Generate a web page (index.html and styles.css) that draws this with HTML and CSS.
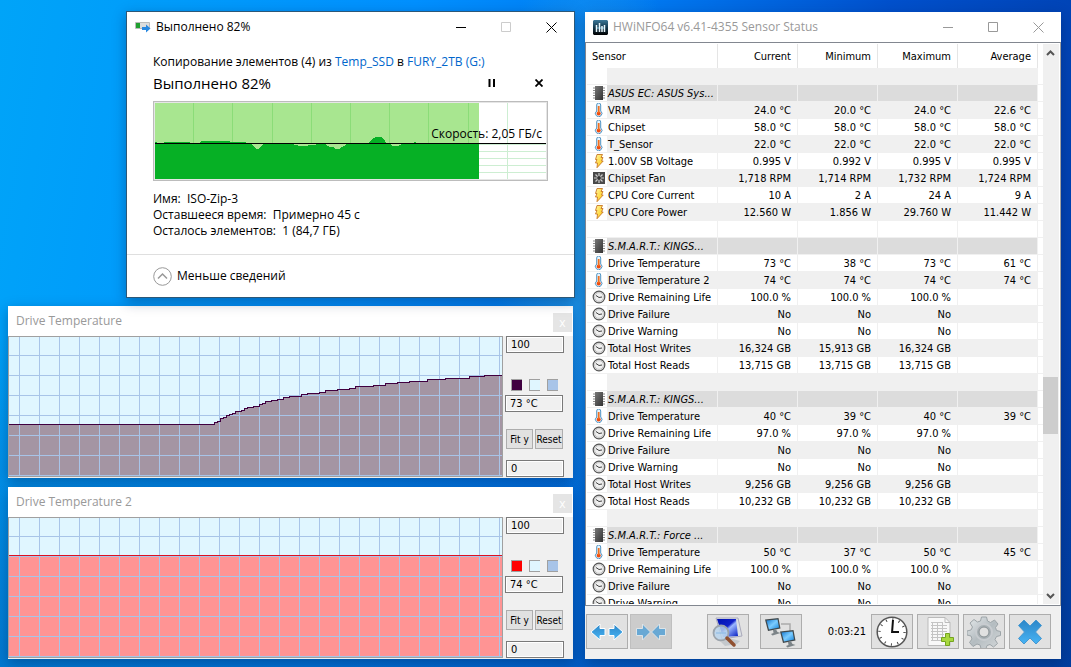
FILE: index.html
```html
<!DOCTYPE html>
<html lang="ru">
<head>
<meta charset="utf-8">
<title>Desktop</title>
<link rel="stylesheet" href="styles.css">
</head>
<body>
<svg class="defs" aria-hidden="true">
  <defs>
    <linearGradient id="chipFill" x1="0" y1="0" x2="1" y2="1"><stop offset="0" stop-color="#777"/><stop offset="1" stop-color="#333"/></linearGradient>
    <linearGradient id="boltFill" x1="0" y1="0" x2="1" y2="1"><stop offset="0" stop-color="#fff7a0"/><stop offset="1" stop-color="#ffc400"/></linearGradient>
    <linearGradient id="blueFill" x1="0" y1="0" x2="0" y2="1"><stop offset="0" stop-color="#2c86c8"/><stop offset="1" stop-color="#48b4f4"/></linearGradient>
    <linearGradient id="screenFill" x1="0" y1="0" x2="1" y2="1"><stop offset="0" stop-color="#0010b0"/><stop offset=".45" stop-color="#1020c8"/><stop offset=".55" stop-color="#9cb8ff"/><stop offset="1" stop-color="#0018c0"/></linearGradient>
    <linearGradient id="skyFill" x1="0" y1="0" x2="1" y2="1"><stop offset="0" stop-color="#1478d0"/><stop offset=".5" stop-color="#7cccff"/><stop offset="1" stop-color="#1484dc"/></linearGradient>
    <linearGradient id="steelFill" x1="0" y1="0" x2="1" y2="1"><stop offset="0" stop-color="#e8ecee"/><stop offset=".5" stop-color="#b4bcc0"/><stop offset="1" stop-color="#d4d8da"/></linearGradient>
    <linearGradient id="logoFill" x1="0" y1="0" x2="0" y2="1"><stop offset="0" stop-color="#3c7898"/><stop offset=".5" stop-color="#14384c"/><stop offset="1" stop-color="#000"/></linearGradient>
    <pattern id="gridV" width="20" height="20" patternUnits="userSpaceOnUse"><path d="M10 0h1v20h-1z" fill="#a8c4e8"/></pattern>
    <pattern id="gridH" width="20" height="20" patternUnits="userSpaceOnUse"><path d="M0 18h20v1H0z" fill="#a8c4e8"/></pattern>
  </defs>
  <symbol id="chip" viewBox="0 0 14 14"><path d="M1 2h12M1 4.500h12M1 7h12M1 9.500h12M1 12h12" stroke="#888"/><path d="M3 0h8v14H3z" fill="url(#chipFill)"/></symbol>
  <symbol id="temp" viewBox="0 0 14 14"><path d="M4.700 2a2 2 0 0 1 4 0v6a3.200 3.200 0 1 1-4 0z" fill="#e8f4fc" stroke="#5094c4"/><circle cx="6.700" cy="10.500" r="2" fill="#f04c10"/><path d="M6.700 3v7" stroke="#f07020" stroke-width="1.800"/></symbol>
  <symbol id="volt" viewBox="0 0 14 14"><path d="M5 .5h5.500L9 3.500h2L9.500 7h1.700L5 13.700 5.500 9H3.500L5 5.500H3.500z" fill="url(#boltFill)" stroke="#c87828" stroke-width=".9"/></symbol>
  <symbol id="fan" viewBox="0 0 14 14"><path d="M1 1h12v12H1z" fill="#4a4a4a"/><path d="M7 2v10M2 7h10M3.500 3.500l7 7M10.500 3.500l-7 7" stroke="#ccc" stroke-width="1.200"/><circle cx="7" cy="7" r="1.900" fill="#333"/></symbol>
  <symbol id="dial" viewBox="0 0 14 14"><circle cx="7" cy="7" r="5.800" fill="#f0f0f0" stroke="#555" stroke-width="1.200"/><circle cx="7" cy="7" r="4.400" fill="none" stroke="#bbb" stroke-width=".8"/><path d="M4 5.500L7 7.500l3-.5" stroke="#444" fill="none"/></symbol>
  <symbol id="monitor" viewBox="0 0 18 18"><path d="M1 1.500l13.500-1.500 2 10.500L4 13z" fill="#40484c"/><path d="M2.500 2.600l11-1.200 1.500 8.200L5 11.600z" fill="url(#skyFill)"/><path d="M9 12l3-.5 1.500 2.500 3 1-8 2.500-1.500-1.500 2.500-1z" fill="#7c8488"/></symbol>
</svg>

<main class="desktop">
  <section class="window copy" aria-label="Копирование">
    <header class="bar">
      <svg class="copy-icon" viewBox="0 0 16 12" width="16" height="12"><path d="M.5 1.500h14v6H.5z" fill="#ddd" stroke="#bbb"/><path d="M1 2h4v5H1z" fill="#20a030"/><path d="M7 6h4V3.500l4.500 4-4.500 4V9H7z" fill="#2888e0"/></svg>
      <span class="bar-title">Выполнено 82%</span>
      <button class="cap" aria-label="Свернуть"><svg width="11" height="11"><path d="M0 5.500h10" stroke="#000"/></svg></button>
      <button class="cap" aria-label="Развернуть"><svg width="11" height="11"><path d="M.5.500h9v9h-9z" fill="none" stroke="#ccc"/></svg></button>
      <button class="cap" aria-label="Закрыть"><svg width="11" height="11"><path d="M.5.500l10 10M10.500.500l-10 10" stroke="#000"/></svg></button>
    </header>
    <div class="copy-body">
      <p class="route">Копирование элементов (4) из <a href="#src">Temp_SSD</a> в <a href="#dst">FURY_2TB (G:)</a></p>
      <div class="progress-head">
        <h1>Выполнено 82%</h1>
        <button class="mini" aria-label="Пауза"><svg width="8" height="8"><path d="M1.500 0v8M6 0v8" stroke="#000" stroke-width="2"/></svg></button>
        <button class="mini" aria-label="Отмена"><svg width="8" height="8"><path d="M.5.500l7 7M7.500.500l-7 7" stroke="#000" stroke-width="1.800"/></svg></button>
      </div>
      <div class="speed">
        <svg viewBox="0 0 391 76" preserveAspectRatio="none">
          <path d="M0 0h324v76H0z" fill="#a8e690"/>
          <path d="M38.500 0v76M77.500 0v76M117.500 0v76M156.500 0v76M195.500 0v76M234.500 0v76M273.500 0v76M313.500 0v76" stroke="#8bdc78"/>
          <path d="M352.500 0v76M324 41.500h67M324 48.500h67M324 55.500h67M324 62.500h67M324 69.500h67" stroke="#cdeed2"/>
          <path d="M0 39h2v1h6l2-1h25v1h9l2-2h28l2 1h15v1h122l4-4 4-2h5l4 4 1 2h28v-1h2v1h63v36H0z" fill="#06b025"/>
          <path d="M324 41h67v35h-67z" fill="#fff"/>
          <path d="M352.500 41v35M324 41.500h67M324 48.500h67M324 55.500h67M324 62.500h67M324 69.500h67" stroke="#cdeed2"/>
          <path d="M96 41h12l-3 3-2 2h-2l-2-2zM135 41h28l-5 1h-5v1h-10v-1zM170 41h22l-3 2-5 3h-3l-3-2-3 0zM235 41h12l-4 2h-5z" fill="#a8e690"/>
          <path d="M0 40.500h391" stroke="#000"/>
        </svg>
        <span class="speed-text">Скорость: 2,05 ГБ/с</span>
      </div>
      <div class="facts">
        <p>Имя:&nbsp; ISO-Zip-3</p>
        <p>Оставшееся время:&nbsp; Примерно 45 с</p>
        <p>Осталось элементов:&nbsp; 1 (84,7 ГБ)</p>
      </div>
    </div>
    <footer class="copy-foot">
      <button class="less"><svg width="19" height="19"><circle cx="9.500" cy="9.500" r="8.800" fill="none" stroke="#999"/><path d="M5 11.500l4.500-4.500 4.500 4.500" fill="none" stroke="#999" stroke-width="1.500"/></svg>Меньше сведений</button>
    </footer>
  </section>

  <section class="window temp first">
    <header class="temp-bar"><h2>Drive Temperature</h2><button aria-label="Close">x</button></header>
    <div class="temp-body">
      <svg class="chart" viewBox="0 0 493 139" preserveAspectRatio="none">
        <defs><path id="curve" d="M-2 87.500H205V85.500H208V84.500H211V81.500H214V80.500H217V78.500H220V77.500H223V76.500H226V74.500H232V73.500H235V71.500H238V70.500H244V69.500H250V67.500H253V66.500H256V64.500H262V63.500H268V62.500H274V60.500H280V59.500H292V57.500H298V56.500H310V55.500H316V53.500H328V52.500H340V51.500H346V49.500H364V48.500H376V46.500H388V45.500H400V44.500H418V42.500H436V41.500H460V39.500H475V38.500H495V142H-2z"/></defs>
        <path d="M0 0h493v139H0z" fill="#e0f6ff"/>
        <use href="#curve" class="area"/>
        <path d="M0 0h493v139H0z" fill="url(#gridV)"/><path d="M0 0h493v139H0z" fill="url(#gridH)"/>
        <use href="#curve" class="outline"/>
      </svg>
      <div class="side">
        <input class="val" aria-label="Maximum" value="100">
        <div class="swatches"><button class="c-dark" aria-label="Line colour"></button><button class="c-back" aria-label="Background colour"></button><button class="c-grid" aria-label="Grid colour"></button></div>
        <input class="val now" aria-label="Current temperature" value="73 °C">
        <div class="pair"><button>Fit y</button><button>Reset</button></div>
        <input class="val" aria-label="Minimum" value="0">
      </div>
    </div>
  </section>

  <section class="window temp second">
    <header class="temp-bar"><h2>Drive Temperature 2</h2><button aria-label="Close">x</button></header>
    <div class="temp-body">
      <svg class="chart" viewBox="0 0 493 139" preserveAspectRatio="none">
        <path d="M0 0h493v139H0z" fill="#e0f6ff"/>
        <path d="M0 38h493v101H0z" fill="#ff9494"/>
        <path d="M0 0h493v139H0z" fill="url(#gridV)"/><path d="M0 0h493v139H0z" fill="url(#gridH)"/>
        <path d="M0 37.500h493" stroke="#e01020"/>
      </svg>
      <div class="side">
        <input class="val" aria-label="Maximum" value="100">
        <div class="swatches"><button class="c-red" aria-label="Line colour"></button><button class="c-back" aria-label="Background colour"></button><button class="c-grid" aria-label="Grid colour"></button></div>
        <input class="val now" aria-label="Current temperature" value="74 °C">
        <div class="pair"><button>Fit y</button><button>Reset</button></div>
        <input class="val" aria-label="Minimum" value="0">
      </div>
    </div>
  </section>

  <section class="window hw" lang="en">
    <header class="bar idle">
      <svg class="logo" viewBox="0 0 15 15" width="15" height="15"><path d="M1 0h13l1 1v13l-1 1H1l-1-1V1z" fill="url(#logoFill)"/><path d="M3 8h9" stroke="#6cc0e0"/><path d="M3.500 5v7M6.500 3v9M9 6v6M11.500 5v7" stroke="#e8f6fc" stroke-width="1.500"/></svg>
      <span class="bar-title">HWiNFO64 v6.41-4355 Sensor Status</span>
      <button class="cap" aria-label="Minimize"><svg width="11" height="11"><path d="M0 5.500h10" stroke="#999"/></svg></button>
      <button class="cap" aria-label="Maximize"><svg width="11" height="11"><path d="M.5.500h9v9h-9z" fill="none" stroke="#999"/></svg></button>
      <button class="cap" aria-label="Close"><svg width="11" height="11"><path d="M.5.500l10 10M10.500.500l-10 10" stroke="#999"/></svg></button>
    </header>
    <div class="list">
      <div class="view">
        <table>
          <colgroup><col class="w-icon"><col><col class="w-num"><col class="w-num"><col class="w-num"><col class="w-num"><col class="w-end"></colgroup>
          <thead><tr><th colspan="2" class="name">Sensor</th><th>Current</th><th>Minimum</th><th>Maximum</th><th>Average</th><th class="end"></th></tr></thead>
          <tbody id="rows"></tbody>
        </table>
      </div>
      <div class="scroll">
        <svg width="15" height="19"><path d="M4 11l3.500-3.500L11 11" fill="none" stroke="#555" stroke-width="2"/></svg>
        <div class="track"><div class="thumb"></div></div>
        <svg width="15" height="19"><path d="M4 9l3.500 3.500L11 9" fill="none" stroke="#555" stroke-width="2"/></svg>
      </div>
    </div>
    <footer class="tools">
      <div class="group">
        <button aria-label="Expand"><svg width="34" height="20"><path d="M1 10l9-8v4.500h5v7h-5V18zM33 10l-9-8v4.500h-5v7h5V18z" fill="url(#blueFill)" stroke="#fff"/></svg></button>
        <button class="off" aria-label="Collapse" disabled><svg width="34" height="20"><path d="M16.500 10l-8-8v4.500h-6v7h6V18zM17.500 10l8-8v4.500h6v7h-6V18z" fill="#68a8d4" stroke="#dde4e8"/></svg></button>
      </div>
      <div class="group mid">
        <button aria-label="Summary"><svg width="34" height="32"><path d="M5 2h22l4 18-20 3z" fill="#dce0e4" stroke="#aab"/><path d="M6 3h19l2 17-15 1z" fill="url(#screenFill)"/><path d="M10 26l8-4 11 3-3 3-12 2z" fill="#c4c8cc"/><circle cx="10" cy="17" r="7.500" fill="#b8d4ec" fill-opacity=".85" stroke="#9ca4ac" stroke-width="1.800"/><path d="M5 17h10" stroke="#88b8e4"/><path d="M16 22l7 7" stroke="#905030" stroke-width="3.500" stroke-linecap="round"/></svg></button>
        <button aria-label="Remote"><svg width="34" height="32"><path d="M17 8h9v9" fill="none" stroke="#aaa" stroke-width="1.500"/><use href="#monitor" x="0" y="2" width="18" height="18"/><use href="#monitor" x="15" y="14" width="18" height="18"/></svg></button>
      </div>
      <output>0:03:21</output>
      <div class="group right">
        <button aria-label="Clock"><svg width="34" height="32"><circle cx="17" cy="16" r="14.800" fill="#fff" stroke="#555" stroke-width="1.500"/><circle cx="17" cy="16" r="12.500" fill="none" stroke="#444" stroke-width="2.500" stroke-dasharray="1 5.545"/><path d="M17 17l1-13M17 16h7" fill="none" stroke="#111" stroke-width="2"/></svg></button>
        <button aria-label="Log"><svg width="34" height="32"><path d="M7 1.500h17l5 5v23H7z" fill="#f8f8f8" stroke="#bbb"/><path d="M24 1.500v5h5" fill="none" stroke="#bbb"/><path d="M10 6.500h12M10 9.500h16M10 12.500h16M10 15.500h16M10 18.500h13M10 21.500h11M10 24.500h11M11.500 6v19M16.500 6v19M21.500 6v15" stroke="#c4c4c4"/><path d="M24.500 17.500h4v4h4v4h-4v4h-4v-4h-4v-4h4z" fill="#a8d840" stroke="#74a420"/></svg></button>
        <button aria-label="Settings"><svg width="34" height="32"><path d="M14.500 1h5l1 4 3 1.500 4-2.500 3.500 4-2.500 3.500 1 3 4 1v4l-4 1-1.500 3 2.500 4-4 3.500-3.500-2.500-3 1-1 3h-5l-1-3.500-3-1-4 2.500-3.500-4 2.500-3.500-1-3-4-1v-4l4-1 1.500-3-2.500-4 4-3.500 3.500 2.500 3-1z" fill="url(#steelFill)" stroke="#9ca4a8"/><circle cx="17" cy="16" r="8" fill="#a8b0b4" stroke="#c8ccd0" stroke-width="2"/><circle cx="17" cy="16" r="5" fill="#e1e1e1" stroke="#889094"/></svg></button>
        <button aria-label="Close sensors"><svg width="34" height="32"><path d="M11 4l6 6 6-6 5.500 5.500-6 6.500 6 6.500L23 28l-6-6-6 6-5.500-5.500 6-6.500-6-6.500z" fill="url(#blueFill)" stroke="#4898d0"/></svg></button>
      </div>
    </footer>
  </section>
</main>
<script src="sensors.js"></script>
</body>
</html>
```

FILE: styles.css
```css
* { box-sizing: border-box; }
body { margin: 0; font: 12px/16px "Open Sans", "Noto Sans", sans-serif; color: #000; }
p, h1, h2 { margin: 0; font-weight: 400; }
button { padding: 0; border: 0; background: none; font: inherit; color: inherit; }
.defs { position: absolute; width: 0; height: 0; }

.desktop {
  position: relative; min-height: 100vh; overflow: hidden;
  background:
    radial-gradient(ellipse 100px 300px at 590px 220px, #28a0e8, transparent),
    linear-gradient(100deg, #00a4f8 0%, #0090ff 35%, #0078f0 55%, #0050cc 75%, #003ca8 100%);
}
.desktop::before {
  content: ""; position: absolute; inset: 0;
  background: linear-gradient(180deg, transparent 50%, #00409066 100%);
}
.window { position: absolute; background: #fff; box-shadow: 0 4px 12px #00205060; display: flex; flex-direction: column; }

.bar { display: flex; align-items: center; height: 30px; padding-left: 8px; }
.bar-title { flex: 1; margin-left: 5px; white-space: nowrap; }
.cap { width: 45px; height: 29px; display: grid; place-items: center; }
.idle { color: #999; }

.copy { left: 126px; top: 11px; width: 449px; min-height: 287px; border: 1px solid #2c5878; z-index: 2; }
.copy-body { flex: 1; padding: 12px 26px 0; }
.route a { color: #0066cc; text-decoration: none; }
.progress-head { display: flex; align-items: center; height: 25px; margin-bottom: 6px; gap: 31px; padding-right: 1px; }
.progress-head h1 { flex: 1; font-size: 15px; line-height: 24px; }
.mini { width: 16px; height: 16px; display: grid; place-items: center; }
.speed { position: relative; height: 80px; border: 1px solid #bcbcbc; padding: 1px; background: #e6e6e6; }
.speed svg { display: block; width: 100%; height: 100%; background: #fff; shape-rendering: crispEdges; }
.speed-text { position: absolute; right: 5px; top: 24px; }
.facts { margin-top: 10px; }
.copy-foot { border-top: 1px solid #dfdfdf; height: 43px; padding: 0 26px; display: flex; align-items: center; }
.less { display: flex; align-items: center; gap: 5px; }

.temp { left: 8px; width: 565px; background: #f0f0f0; }
.first { top: 306px; }
.second { top: 487px; }
.temp-bar { display: flex; justify-content: space-between; align-items: center; height: 30px; padding: 0 1px 0 8px; background: #fff; color: #999; }
.temp-bar h2 { font-size: 12px; }
.temp-bar button { align-self: flex-end; width: 19px; height: 19px; margin-bottom: 4px; background: #e5e5e5; color: #fff; line-height: 16px; }
.temp-body { display: flex; height: 142px; padding-bottom: 1px; font: 11px/15px "DejaVu Sans Condensed", "DejaVu Sans", sans-serif; }
.chart { flex: 1; min-width: 0; height: 141px; border: 1px solid #a0a0a0; shape-rendering: crispEdges; }
.area { fill: #a495a3; }
.outline { fill: none; stroke: #400040; }
.side { width: 70px; padding-left: 3px; display: flex; flex-direction: column; }
.val { width: 58px; height: 17px; padding: 0 4px; border: 1px solid #7a7a7a; outline: 1px solid #fff; outline-offset: -2px; background: #f0f0f0; font: inherit; }
.swatches { display: flex; gap: 7px; margin: 26px 0 4px 5px; }
.swatches button { width: 11px; height: 12px; border: 1px solid #a0a0a0; border-right: 0; }
.now { margin-left: -1px; }
.c-dark { background: #400040; }
.c-red { background: #f00; }
.c-back { background: #e0f6ff; }
.c-grid { background: #a8c4e8; }
.pair { display: flex; gap: 2px; margin: 17px 0 11px; }
.pair button { width: 27px; height: 20px; border: 1px solid #adadad; background: #e1e1e1; font-size: 10px; white-space: nowrap; }
.pair button + button { width: 28px; }

.hw { left: 585px; top: 12px; width: 476px; background: #f0f0f0; font: 11px/15px "DejaVu Sans Condensed", "DejaVu Sans", sans-serif; }
.hw .bar { background: #fff; font: 12px/16px "Open Sans", "Noto Sans", sans-serif; }
.list { display: flex; height: 564px; border: 1px solid #828790; border-right-color: #a0a0a0; background: #fff; padding: 1px; }
.view { flex: 1; overflow: hidden; }
table { width: 100%; border-collapse: separate; border-spacing: 0; table-layout: fixed; }
.w-icon { width: 20px; }
.w-num { width: 80px; }
.w-end { width: 5px; }
th { height: 24px; padding: 0 6px 0 0; font-weight: 400; text-align: right; border-right: 1px solid #e5e5e5; }
th.name { padding-left: 5px; text-align: left; }
th.end { border: 0; }
td { height: 17px; padding: 2px 6px 0 0; text-align: right; line-height: 14px; white-space: nowrap; border-bottom: 1px solid #f0f0f0; border-right: 1px solid #f0f0f0; }
td.icon { padding: 0 0 0 5px; border-right: 0; }
td.icon svg { display: block; width: 14px; height: 14px; }
td.name { padding: 2px 0 0 1px; text-align: left; }
td.end { border-right: 0; }
.shade td:not(.icon, .end) { background: #f0f0f0; }
.section td:not(.icon, .end) { background: #dcdcdc; }
.section .name { font-style: italic; }
.scroll { width: 16px; background: #f0f0f0; display: flex; flex-direction: column; }
.scroll svg { display: block; flex: none; }
.track { flex: 1; display: flex; flex-direction: column; padding-top: 314px; }
.thumb { height: 57px; width: 15px; background: #cdcdcd; }

.tools { display: flex; align-items: center; height: 53px; padding: 0 10px 2px 1px; }
.group { display: flex; gap: 2px; }
.tools button { width: 42px; height: 35px; display: grid; place-items: center; border: 1px solid #adadad; background: #e1e1e1; }
.tools .off { background: #ccc; border-color: #bfbfbf; }
.mid { gap: 11px; margin-left: 35px; }
.right { gap: 4px; }
.tools output { flex: 1; text-align: right; padding-right: 5px; }
```

FILE: sensors.js
```js
const rows = [
  null,
  ["ASUS EC: ASUS Sys..."],
  ["temp", "VRM", "24.0 °C", "20.0 °C", "24.0 °C", "22.6 °C"],
  ["temp", "Chipset", "58.0 °C", "58.0 °C", "58.0 °C", "58.0 °C"],
  ["temp", "T_Sensor", "22.0 °C", "22.0 °C", "22.0 °C", "22.0 °C"],
  ["volt", "1.00V SB Voltage", "0.995 V", "0.992 V", "0.995 V", "0.995 V"],
  ["fan", "Chipset Fan", "1,718 RPM", "1,714 RPM", "1,732 RPM", "1,724 RPM"],
  ["volt", "CPU Core Current", "10 A", "2 A", "24 A", "9 A"],
  ["volt", "CPU Core Power", "12.560 W", "1.856 W", "29.760 W", "11.442 W"],
  null,
  ["S.M.A.R.T.: KINGS..."],
  ["temp", "Drive Temperature", "73 °C", "38 °C", "73 °C", "61 °C"],
  ["temp", "Drive Temperature 2", "74 °C", "74 °C", "74 °C", "74 °C"],
  ["dial", "Drive Remaining Life", "100.0 %", "100.0 %", "100.0 %", ""],
  ["dial", "Drive Failure", "No", "No", "No", ""],
  ["dial", "Drive Warning", "No", "No", "No", ""],
  ["dial", "Total Host Writes", "16,324 GB", "15,913 GB", "16,324 GB", ""],
  ["dial", "Total Host Reads", "13,715 GB", "13,715 GB", "13,715 GB", ""],
  null,
  ["S.M.A.R.T.: KINGS..."],
  ["temp", "Drive Temperature", "40 °C", "39 °C", "40 °C", "39 °C"],
  ["dial", "Drive Remaining Life", "97.0 %", "97.0 %", "97.0 %", ""],
  ["dial", "Drive Failure", "No", "No", "No", ""],
  ["dial", "Drive Warning", "No", "No", "No", ""],
  ["dial", "Total Host Writes", "9,256 GB", "9,256 GB", "9,256 GB", ""],
  ["dial", "Total Host Reads", "10,232 GB", "10,232 GB", "10,232 GB", ""],
  null,
  ["S.M.A.R.T.: Force ..."],
  ["temp", "Drive Temperature", "50 °C", "37 °C", "50 °C", "45 °C"],
  ["dial", "Drive Remaining Life", "100.0 %", "100.0 %", "100.0 %", ""],
  ["dial", "Drive Failure", "No", "No", "No", ""],
  ["dial", "Drive Warning", "No", "No", "No", ""]
];

document.getElementById("rows").innerHTML = rows.map((row, i) => {
  const section = row && row.length === 1;
  const icon = section ? "chip" : row ? row[0] : "";
  const name = section ? row[0] : row ? row[1] : "";
  const values = row && !section ? row.slice(2) : ["", "", "", ""];
  const kind = section ? "section" : i % 2 === 0 ? "shade" : "";
  return `<tr class="${kind}"><td class="icon">${icon ? `<svg><use href="#${icon}"/></svg>` : ""}</td>` +
    `<td class="name">${name}</td>${values.map(v => `<td>${v}</td>`).join("")}<td class="end"></td></tr>`;
}).join("");
```
